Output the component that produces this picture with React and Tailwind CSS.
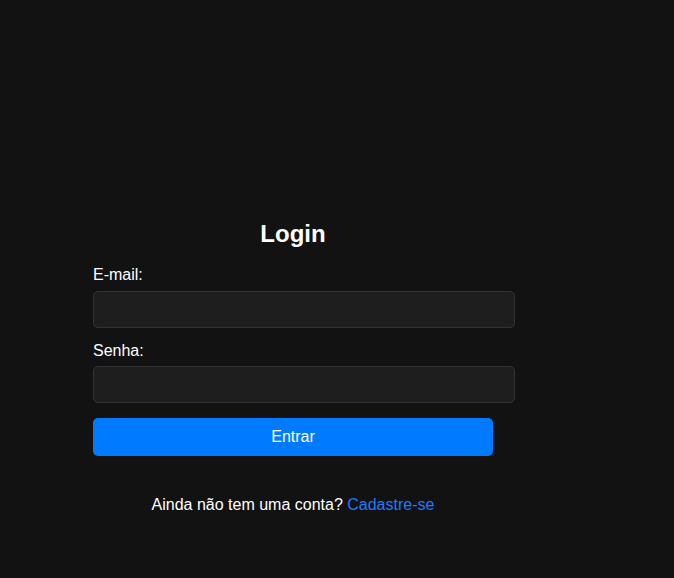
export default function App() {
  return (
    <div className="min-h-screen w-full bg-[#121212] text-white font-['Liberation_Sans',Arial,sans-serif]">
      <div className="w-[400px] ml-[93px] pt-[220px]">
        <h2 className="text-center text-[24px] leading-[28px] font-bold">Login</h2>
        <form className="mt-[18px]" onSubmit={(e) => e.preventDefault()}>
          <label className="block text-[16px] leading-[18px] mb-[7px]">E-mail:</label>
          <input
            type="email"
            className="block w-[422px] h-[37px] px-[10px] bg-[#1e1e1e] border border-[#333333] rounded-[5px] text-white outline-none"
          />
          <label className="block text-[16px] leading-[18px] mt-[14px] mb-[6px]">Senha:</label>
          <input
            type="password"
            className="block w-[422px] h-[37px] px-[10px] bg-[#1e1e1e] border border-[#333333] rounded-[5px] text-white outline-none"
          />
          <button
            type="submit"
            className="block w-[400px] h-[38px] mt-[15px] bg-[#007bff] rounded-[5px] text-white text-[16px]"
          >
            Entrar
          </button>
        </form>
        <p className="mt-[40px] text-center text-[16px] leading-[18px]">
          Ainda não tem uma conta?{" "}
          <a href="#" className="text-[#1e7bff]">
            Cadastre-se
          </a>
        </p>
      </div>
    </div>
  );
}
